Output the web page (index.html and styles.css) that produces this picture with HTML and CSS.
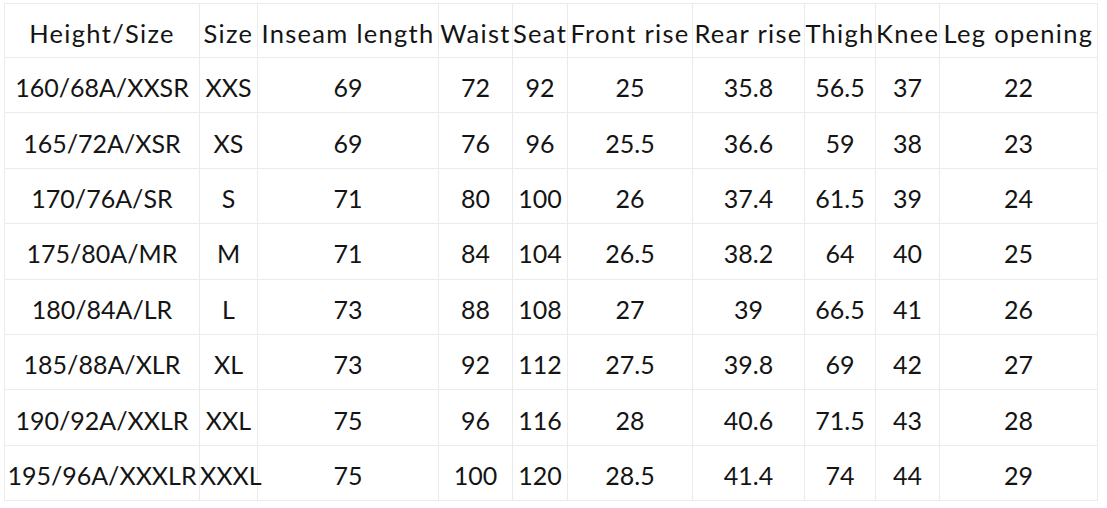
FILE: index.html
```html
<!DOCTYPE html>
<html>
<head>
<meta charset="utf-8">
<link rel="stylesheet" href="styles.css">
</head>
<body>
<div class="page">
<table class="chart">
<colgroup>
<col class="c1"><col class="c2"><col class="c3"><col class="c4"><col class="c5"><col class="c6"><col class="c7"><col class="c8"><col class="c9"><col class="c10">
</colgroup>
<thead>
<tr class="head"><td>Height/Size</td><td>Size</td><td>Inseam length</td><td>Waist</td><td>Seat</td><td>Front rise</td><td>Rear rise</td><td>Thigh</td><td>Knee</td><td>Leg opening</td></tr>
</thead>
<tbody>
<tr><td>160/68A/XXSR</td><td>XXS</td><td>69</td><td>72</td><td>92</td><td>25</td><td>35.8</td><td>56.5</td><td>37</td><td>22</td></tr>
<tr><td>165/72A/XSR</td><td>XS</td><td>69</td><td>76</td><td>96</td><td>25.5</td><td>36.6</td><td>59</td><td>38</td><td>23</td></tr>
<tr><td>170/76A/SR</td><td>S</td><td>71</td><td>80</td><td>100</td><td>26</td><td>37.4</td><td>61.5</td><td>39</td><td>24</td></tr>
<tr><td>175/80A/MR</td><td>M</td><td>71</td><td>84</td><td>104</td><td>26.5</td><td>38.2</td><td>64</td><td>40</td><td>25</td></tr>
<tr><td>180/84A/LR</td><td>L</td><td>73</td><td>88</td><td>108</td><td>27</td><td>39</td><td>66.5</td><td>41</td><td>26</td></tr>
<tr><td>185/88A/XLR</td><td>XL</td><td>73</td><td>92</td><td>112</td><td>27.5</td><td>39.8</td><td>69</td><td>42</td><td>27</td></tr>
<tr><td>190/92A/XXLR</td><td>XXL</td><td>75</td><td>96</td><td>116</td><td>28</td><td>40.6</td><td>71.5</td><td>43</td><td>28</td></tr>
<tr><td>195/96A/XXXLR</td><td>XXXL</td><td>75</td><td>100</td><td>120</td><td>28.5</td><td>41.4</td><td>74</td><td>44</td><td>29</td></tr>
</tbody>
</table>
</div>
</body>
</html>
```
FILE: styles.css
```css
html, body {
  margin: 0;
  padding: 0;
  background: #ffffff;
}
.page {
  padding: 3px 0 0 4px;
}
.chart {
  border-collapse: collapse;
  table-layout: fixed;
  width: 1093px;
  font-family: Lato, "Open Sans", sans-serif;
  font-size: 25px;
  color: #141414;
}
.chart td {
  border: 1px solid #ebebeb;
  text-align: center;
  white-space: nowrap;
  overflow: visible;
  padding: 4px 0 0 0;
  line-height: 30px;
  box-sizing: border-box;
}
.chart .head td {
  height: 54px;
  font-size: 25.5px;
  letter-spacing: 1.3px;
}
.chart tbody td {
  height: 55.4px;
}
.c1 { width: 195px; }
.c2 { width: 58px; }
.c3 { width: 181px; }
.c4 { width: 74px; }
.c5 { width: 55px; }
.c6 { width: 125px; }
.c7 { width: 112px; }
.c8 { width: 71px; }
.c9 { width: 64px; }
.c10 { width: 158px; }
```
